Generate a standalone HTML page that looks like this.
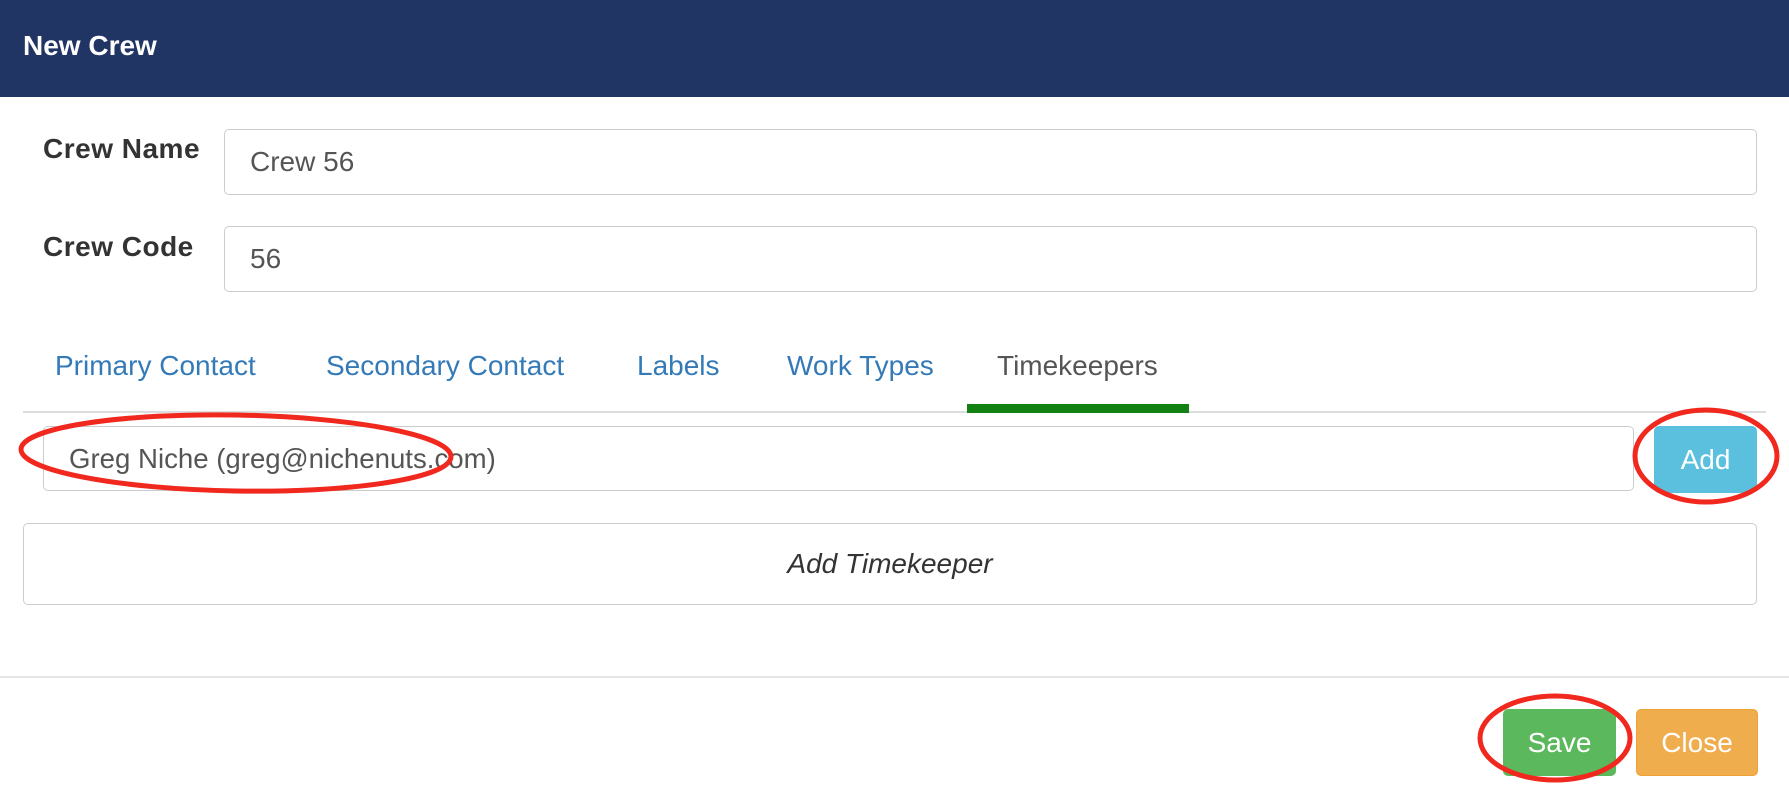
<!DOCTYPE html>
<html><head><style>
body{margin:0;width:1789px;height:802px;background:#fff;font-family:"Liberation Sans",sans-serif;position:relative;overflow:hidden}
.a{position:absolute}
.hdr{left:0;top:0;width:1789px;height:97px;background:#213564}
.inp{border:1.5px solid #ccc;border-radius:5px;box-sizing:border-box;color:#555;font-size:28px;display:flex;align-items:center}
.lbl{font-weight:bold;font-size:28px;color:#333;letter-spacing:0.5px}
.tab{top:350px;font-size:28px;color:#337ab7}
.btn{color:#fff;font-size:28px;border-radius:5px;display:flex;align-items:center;justify-content:center;box-sizing:border-box}
</style></head><body>
<div class="a hdr"></div>
<div class="a" style="left:23px;top:30px;color:#fff;font-weight:bold;font-size:28px">New Crew</div>
<div class="a lbl" style="left:43px;top:133px">Crew Name</div>
<div class="a inp" style="left:224px;top:129px;width:1533px;height:66px;padding-left:25px">Crew 56</div>
<div class="a lbl" style="left:43px;top:231px">Crew Code</div>
<div class="a inp" style="left:224px;top:226px;width:1533px;height:66px;padding-left:25px">56</div>
<div class="a tab" style="left:55px">Primary Contact</div>
<div class="a tab" style="left:326px">Secondary Contact</div>
<div class="a tab" style="left:637px">Labels</div>
<div class="a tab" style="left:787px">Work Types</div>
<div class="a tab" style="left:997px;color:#555">Timekeepers</div>
<div class="a" style="left:23px;top:411px;width:1743px;height:2px;background:#ddd"></div>
<div class="a" style="left:967px;top:404px;width:222px;height:9px;background:#138013"></div>
<div class="a inp" style="left:43px;top:426px;width:1591px;height:65px;padding-left:25px;font-size:27.6px">Greg Niche (greg@nichenuts.com)</div>
<div class="a btn" style="left:1654px;top:426px;width:103px;height:67px;background:#5bc0de">Add</div>
<div class="a inp" style="left:23px;top:523px;width:1734px;height:82px;justify-content:center;font-style:italic;color:#333">Add Timekeeper</div>
<div class="a" style="left:0;top:676px;width:1789px;height:2px;background:#e5e5e5"></div>
<div class="a btn" style="left:1503px;top:709px;width:113px;height:67px;background:#5cb85c">Save</div>
<div class="a btn" style="left:1636px;top:709px;width:122px;height:67px;background:#f0ad4e;border:1.5px solid #eea236">Close</div>
<svg class="a" style="left:0;top:0" width="1789" height="802">
<g fill="none" stroke="#f0281e" stroke-width="5">
<ellipse cx="236" cy="453" rx="215" ry="38" transform="rotate(1 236 453)"/>
<ellipse cx="1706" cy="456" rx="71" ry="46"/>
<ellipse cx="1555" cy="738" rx="75" ry="42"/>
</g></svg>
</body></html>
